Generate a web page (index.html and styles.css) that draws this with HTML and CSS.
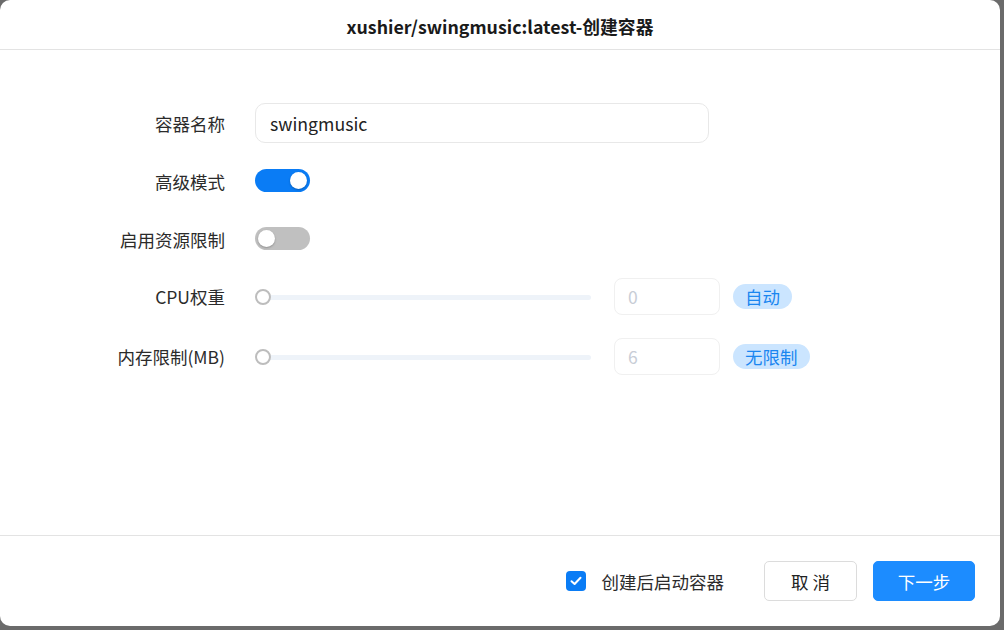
FILE: index.html
```html
<!DOCTYPE html>
<html lang="zh-CN">
<head>
  <meta charset="UTF-8">
  <title>创建容器</title>
  <link rel="stylesheet" href="styles.css">
</head>
<body>
  <div class="dialog">
    <div class="dialog-header">xushier/swingmusic:latest-创建容器</div>

    <div class="dialog-body">
      <div class="form-row">
        <label class="form-label">容器名称</label>
        <input class="text-input" type="text" value="swingmusic">
      </div>
      <div class="form-row">
        <label class="form-label">高级模式</label>
        <span class="switch on"><span class="knob"></span></span>
      </div>
      <div class="form-row">
        <label class="form-label">启用资源限制</label>
        <span class="switch"><span class="knob"></span></span>
      </div>
      <div class="form-row slider-row">
        <label class="form-label">CPU权重</label>
        <div class="slider"><span class="track"></span><span class="thumb"></span></div>
        <input class="num-input" type="text" value="0" disabled>
        <span class="tag">自动</span>
      </div>
      <div class="form-row slider-row">
        <label class="form-label">内存限制(MB)</label>
        <div class="slider"><span class="track"></span><span class="thumb"></span></div>
        <input class="num-input" type="text" value="6" disabled>
        <span class="tag">无限制</span>
      </div>
    </div>

    <div class="dialog-footer">
      <label class="check">
        <span class="check-box">
          <svg width="12" height="10" viewBox="0 0 12 10"><path d="M1.5 5.2 L4.6 8 L10.5 1.8" fill="none" stroke="#fff" stroke-width="2" stroke-linecap="round" stroke-linejoin="round"/></svg>
        </span>
        创建后启动容器
      </label>
      <button class="btn">取 消</button>
      <button class="btn primary">下一步</button>
    </div>
  </div>
</body>
</html>
```

FILE: styles.css
```css
/* Page */
body {
  margin: 0;
  width: 1004px;
  height: 630px;
  background: #6b6b6b;
  font-family: "Noto Sans CJK SC", "Noto Sans", sans-serif;
  color: #222;
  overflow: hidden;
}

/* Dialog */
.dialog {
  width: 1000px;
  height: 626px;
  background: #fff;
  border-radius: 10px;
  display: flex;
  flex-direction: column;
}

.dialog-header {
  height: 50px;
  box-sizing: border-box;
  border-bottom: 1px solid #e3e3e3;
  display: flex;
  align-items: center;
  justify-content: center;
  font-size: 17.8px;
  font-weight: bold;
  color: #1a1a1a;
  padding-top: 2px;
}

.dialog-body {
  flex: 1;
  padding-top: 53px;
}

/* Form rows */
.form-row {
  display: flex;
  align-items: center;
  height: 40px;
  margin-bottom: 18px;
}

.form-row.slider-row {
  height: 38px;
  margin-bottom: 22px;
}

.form-label {
  width: 255px;
  text-align: right;
  padding-right: 30px;
  box-sizing: border-box;
  font-size: 17.5px;
  color: #2b2b2b;
}

.text-input {
  width: 454px;
  height: 40px;
  box-sizing: border-box;
  border: 1px solid #e8e8e8;
  border-radius: 10px;
  padding: 0 14px;
  font-family: inherit;
  font-size: 17.7px;
  color: #222;
  outline: none;
}

/* Switch */
.switch {
  width: 55px;
  height: 23px;
  border-radius: 12px;
  background: #c0c0c0;
  position: relative;
  box-sizing: border-box;
  margin-top: -2px;
}

.switch .knob {
  position: absolute;
  top: 3px;
  left: 3px;
  width: 17px;
  height: 17px;
  border-radius: 50%;
  background: #fff;
  box-shadow: 0 1px 2px rgba(0, 0, 0, 0.25);
}

.switch.on {
  background: #0a7cf5;
}

.switch.on .knob {
  left: 35px;
}

/* Slider */
.slider {
  width: 336px;
  height: 20px;
  position: relative;
  margin-right: 23px;
}

.slider .track {
  position: absolute;
  left: 7px;
  right: 0;
  top: 9px;
  height: 5px;
  border-radius: 3px;
  background: #eef3f9;
}

.slider .thumb {
  position: absolute;
  left: 0;
  top: 3px;
  width: 16px;
  height: 16px;
  box-sizing: border-box;
  border: 2px solid #bdbdbd;
  border-radius: 50%;
  background: #fff;
}

.num-input {
  width: 106px;
  height: 37px;
  box-sizing: border-box;
  border: 1px solid #f0f0f0;
  border-radius: 8px;
  background: #fff;
  padding: 0 13px;
  font-family: inherit;
  font-size: 17.5px;
  color: #c8cdd6;
  margin-right: 13px;
}

.tag {
  height: 25px;
  line-height: 25px;
  padding: 0 12px;
  border-radius: 13px;
  background: #cbe5ff;
  color: #1a86f0;
  font-size: 17.5px;
}

/* Footer */
.dialog-footer {
  height: 91px;
  box-sizing: border-box;
  border-top: 1px solid #e3e3e3;
  display: flex;
  align-items: center;
  justify-content: flex-end;
  padding: 0 25px 0 0;
}

.check {
  display: flex;
  align-items: center;
  font-size: 17.5px;
  color: #2b2b2b;
  margin-right: 40px;
}

.check-box {
  width: 20px;
  height: 20px;
  border-radius: 4px;
  background: #0a7cf5;
  display: flex;
  align-items: center;
  justify-content: center;
  margin-right: 16px;
}

.btn {
  height: 40px;
  width: 93px;
  box-sizing: border-box;
  border: 1px solid #dcdcdc;
  border-radius: 5px;
  background: #fff;
  font-family: inherit;
  font-size: 17.5px;
  color: #222;
  padding: 0;
  cursor: pointer;
}

.btn.primary {
  margin-left: 16px;
  width: 102px;
  background: #1c8cff;
  border-color: #1c8cff;
  color: #fff;
}
```
